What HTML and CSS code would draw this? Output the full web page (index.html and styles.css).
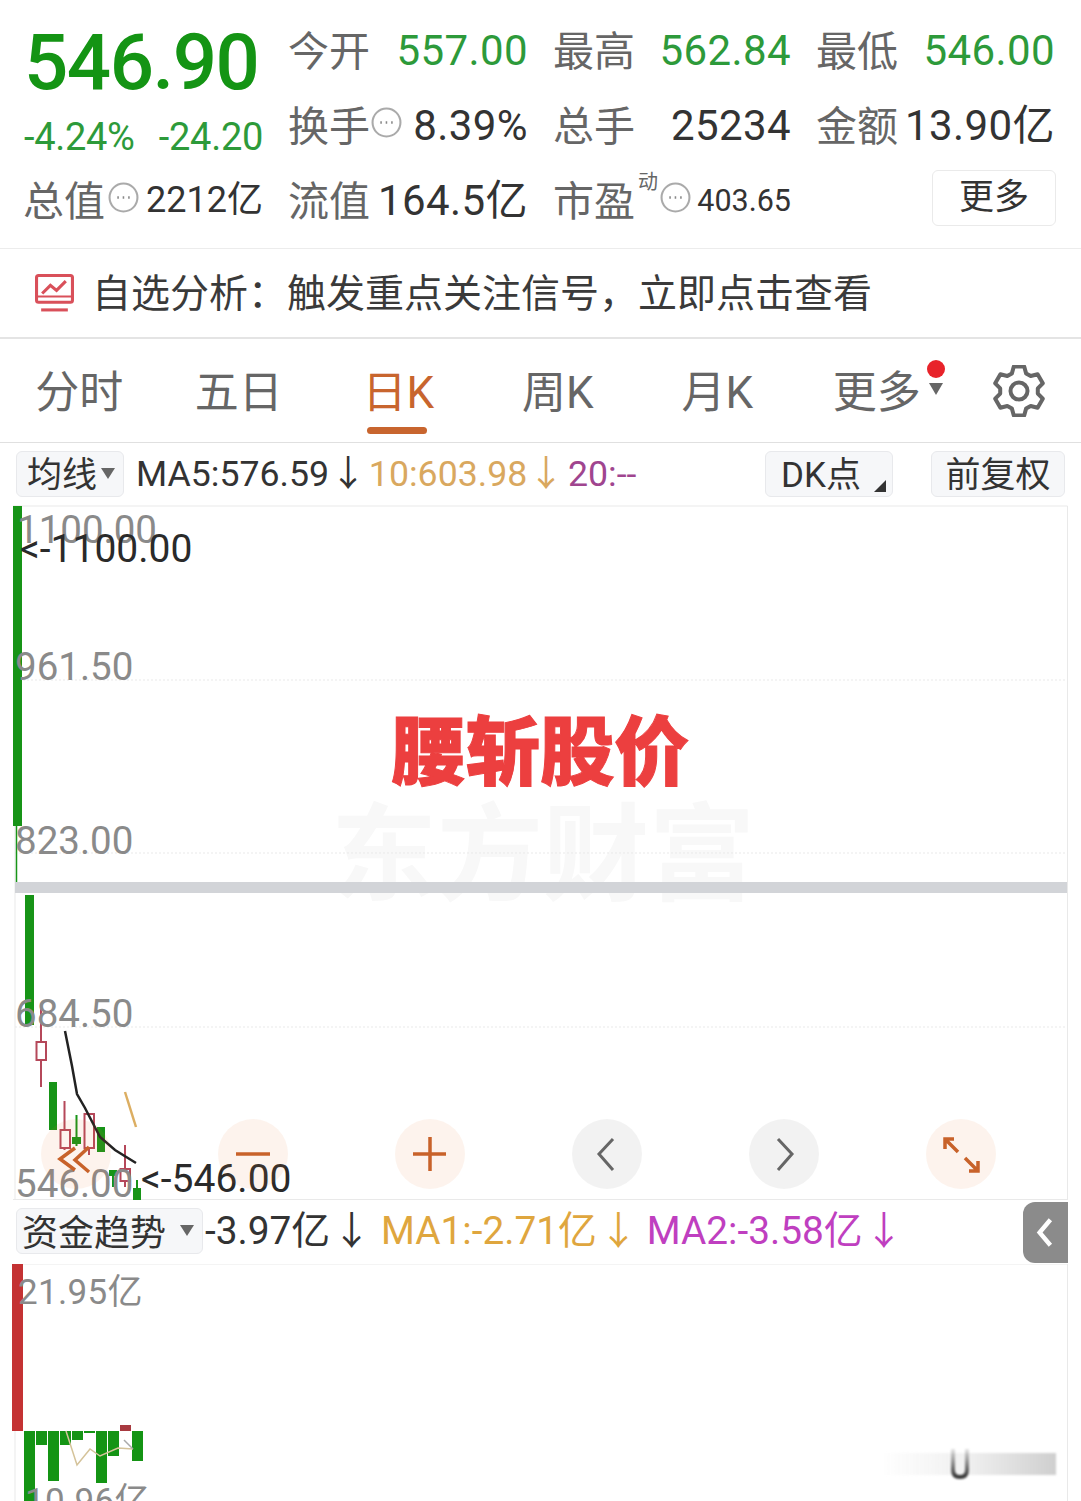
FILE: index.html
```html
<!DOCTYPE html>
<html lang="zh-CN">
<head>
<meta charset="utf-8">
<title>行情</title>
<link rel="stylesheet" href="styles.css">
</head>
<body>
<div class="page">
  <section class="quote">
    <div class="price-cell">
      <div class="price">546.90</div>
      <div class="change"><span>-4.24%</span><span>-24.20</span></div>
    </div>
    <div class="cell"><span class="label">今开</span><span class="num green">557.00</span></div>
    <div class="cell"><span class="label">最高</span><span class="num green">562.84</span></div>
    <div class="cell"><span class="label">最低</span><span class="num green">546.00</span></div>
    <div class="cell"><span class="label">换手</span><svg class="dots dots-up" viewBox="0 0 30 30"><circle cx="15" cy="15" r="13.5"/><path d="M9 15h1.5M14.2 15h1.5M19.5 15h1.5"/></svg><span class="num num-end">8.39%</span></div>
    <div class="cell"><span class="label">总手</span><span class="num">25234</span></div>
    <div class="cell"><span class="label">金额</span><span class="num">13.90亿</span></div>
    <div class="cell cell-left"><span class="label">总值</span><svg class="dots dots-up" viewBox="0 0 30 30"><circle cx="15" cy="15" r="13.5"/><path d="M9 15h1.5M14.2 15h1.5M19.5 15h1.5"/></svg><span class="num num-sm num-end">2212亿</span></div>
    <div class="cell"><span class="label">流值</span><span class="num">164.5亿</span></div>
    <div class="cell cell-pe"><span class="label">市盈</span><sup class="dyn">动</sup><svg class="dots dots-pe" viewBox="0 0 30 30"><circle cx="15" cy="15" r="13.5"/><path d="M9 15h1.5M14.2 15h1.5M19.5 15h1.5"/></svg><span class="num num-xs num-end">403.65</span></div>
    <div class="cell cell-more"><button class="more-btn">更多</button></div>
  </section>

  <section class="notice">
    <svg class="notice-icon" viewBox="0 0 38 38"><rect x="1.500" y="1.500" width="35" height="26" rx="2"/><path d="M7 19l8-8 6 5 9-9"/><path class="thin" d="M2 22h34"/><path d="M6 35h26"/></svg>
    <span class="notice-text">自选分析：触发重点关注信号，立即点击查看</span>
  </section>

  <nav class="tabs">
    <div class="tab">分时</div>
    <div class="tab">五日</div>
    <div class="tab tab-active">日K</div>
    <div class="tab">周K</div>
    <div class="tab">月K</div>
    <div class="tab tab-more">更多<i class="red-dot"></i><i class="tab-caret"></i></div>
    <svg class="gear" viewBox="0 0 52 52"><path d="M18.900 8.400L20.800 1.500H31.200L33.100 8.400L37.700 11L44.600 9.300L49.800 18.300L44.800 23.400V28.600L49.800 33.700L44.600 42.700L37.700 41L33.100 43.600L31.200 50.500H20.800L18.900 43.600L14.300 41L7.400 42.700L2.200 33.700L7.200 28.600V23.400L2.200 18.300L7.400 9.300L14.300 11Z"/><circle cx="26" cy="26" r="8.500"/></svg>
  </nav>

  <div class="ma-bar">
    <div class="select select-ma">均线<i class="caret"></i></div>
    <span class="ma-text ma-first">MA5:576.59<b class="arrow">↓</b></span>
    <span class="ma-text gold">10:603.98<b class="arrow">↓</b></span>
    <span class="ma-text plum">20:--</span>
    <div class="select select-dk">DK点<i class="corner"></i></div>
    <div class="select select-fq">前复权</div>
  </div>

  <div class="chart">
    <svg class="chart-svg" viewBox="0 505 1081 695">
      <text class="watermark" x="331" y="892">东方财富</text>
      <path class="frame" d="M13 506H1067.500V1200M1067.500 1199.500H13M15 506V1200"/>
      <path class="grid" d="M15 680H1067M15 853H1067M15 1027H1067"/>
      <rect class="band" x="15" y="882" width="1052" height="11"/>
      <rect class="up-bar" x="13" y="506" width="9" height="320"/>
      <path class="thin-line" d="M16.500 826V882"/>
      <rect class="up-bar" x="25" y="895" width="9" height="130"/>
      <g class="hollow">
        <path d="M41 1004V1042M41 1060V1087"/><rect x="36.500" y="1042" width="9.500" height="18"/>
        <path d="M64.500 1101V1130M64.500 1148V1150"/><rect x="60.500" y="1130" width="9.500" height="18"/>
        <path d="M89 1148V1155"/><rect x="84.500" y="1114" width="9.500" height="34"/>
        <path d="M125 1145V1169M125 1181V1187"/><rect x="120.500" y="1169" width="9.500" height="12"/>
      </g>
      <rect class="up-bar" x="49" y="1082" width="8" height="48"/>
      <rect class="up-bar" x="72" y="1137" width="9" height="7"/><path class="wick" d="M76.500 1115V1146"/>
      <rect class="up-bar" x="97" y="1127" width="8" height="25"/>
      <rect class="up-bar" x="109" y="1170" width="8" height="6"/><path class="wick" d="M113 1170V1187"/>
      <rect class="up-bar" x="133" y="1188" width="8" height="12"/><path class="wick" d="M137 1180V1190"/>
      <path class="ma-line" d="M65 1031L72 1066L77 1094L85 1108L100 1137L115 1150L136 1163"/>
      <path class="gold-line" d="M125 1092L136 1127"/>
      <text class="axis" x="17" y="543">1100.00</text>
      <text class="mark" x="20" y="562">&lt;-1100.00</text>
      <text class="axis" x="15" y="680">961.50</text>
      <text class="axis" x="15" y="854">823.00</text>
      <text class="axis" x="15" y="1027">684.50</text>
      <text class="axis" x="15" y="1197">546.00</text>
      <text class="mark" x="141" y="1192">&lt;-546.00</text>
      <text class="headline" x="391" y="779">腰斩股价</text>
    </svg>
    <div class="controls">
      <button class="round warm"><svg viewBox="0 0 70 70"><path d="M34 29L19 40L34 51M48 28L34 41L48 53"/></svg></button>
      <button class="round warm"><svg viewBox="0 0 70 70"><path d="M18 35H52"/></svg></button>
      <button class="round warm"><svg viewBox="0 0 70 70"><path d="M18 35H51M35 18V52"/></svg></button>
      <button class="round cool"><svg viewBox="0 0 70 70"><path d="M41 20L27 35L41 51"/></svg></button>
      <button class="round cool"><svg viewBox="0 0 70 70"><path d="M29 20L43 35L29 51"/></svg></button>
      <button class="round warm"><svg viewBox="0 0 70 70"><path d="M19 20L32 33M19 30V20H28M52 52L39 39M52 42V52H43"/></svg></button>
    </div>
  </div>

  <div class="fund-bar">
    <div class="select select-fund">资金趋势<i class="caret"></i></div>
    <span class="fund-text fund-main">-3.97亿<b class="arrow">↓</b></span>
    <span class="fund-text fund-gold">MA1:-2.71亿<b class="arrow">↓</b></span>
    <span class="fund-text fund-plum">MA2:-3.58亿<b class="arrow">↓</b></span>
    <div class="side-tab"><svg viewBox="0 0 46 62"><path d="M28 18L17 31L28 44"/></svg></div>
  </div>

  <div class="chart2">
    <svg class="chart-svg" viewBox="0 1264 1081 237">
      <path class="frame" d="M13 1264H1067.500V1501M15 1264V1501"/>
      <rect class="flow-red" x="12" y="1264" width="11" height="167"/>
      <rect class="flow-green" x="24" y="1431" width="11" height="70"/>
      <rect class="flow-green" x="36" y="1431" width="11" height="14"/>
      <rect class="flow-green" x="48" y="1431" width="11" height="50"/>
      <rect class="flow-green" x="60" y="1431" width="11" height="14"/>
      <rect class="flow-green" x="72" y="1431" width="11" height="9"/>
      <rect class="flow-green" x="84" y="1431" width="11" height="2"/>
      <rect class="flow-green" x="96" y="1431" width="11" height="52"/>
      <rect class="flow-green" x="108" y="1431" width="11" height="25"/>
      <rect class="flow-dark" x="120" y="1425" width="11" height="6"/>
      <rect class="flow-green" x="132" y="1431" width="11" height="30"/>
      <path class="tan-line" d="M66 1431L77 1465L90 1449L100 1456L118 1448L133 1449"/>
      <path class="gray-line" d="M124 1440L133 1449"/>
      <text class="axis axis-money" x="18" y="1304">21.95亿</text>
      <text class="axis axis-money" x="25" y="1513">10.96亿</text>
    </svg>
    <div class="smudge"><svg class="smudge-u" viewBox="0 0 20 30"><defs><linearGradient id="fade" x1="0" y1="0" x2="0" y2="1"><stop offset="0" stop-color="#555" stop-opacity=".15"/><stop offset="1" stop-color="#333"/></linearGradient></defs><path d="M3 0V21Q3 28 10 28T17 21V0" stroke="url(#fade)"/></svg></div>
  </div>
</div>
</body>
</html>
```
FILE: styles.css
```css
* { box-sizing: border-box; }
html, body { margin: 0; padding: 0; background: #fff; }
body { font-family: Roboto, "Noto Sans CJK SC", sans-serif; color: #333; }
.page { width: 1081px; height: 1501px; overflow: hidden; }
button { font: inherit; border: 0; padding: 0; background: none; color: inherit; }
i { display: block; }

/* Quote header */
.quote {
  height: 249px;
  padding: 13px 25px 0 24px;
  border-bottom: 1px solid #ececec;
  display: grid;
  grid-template-columns: 239px 240px 238px 239px;
  grid-template-rows: repeat(3, 75px);
  column-gap: 25px;
}
.price-cell { grid-row: 1 / span 2; display: flex; flex-direction: column; }
.price { height: 98px; line-height: 100px; font-size: 78px; font-weight: 500; color: #149414; letter-spacing: -1.500px; }
.change { height: 52px; line-height: 52px; font-size: 38px; letter-spacing: -.3px; color: #2d9a3a; display: flex; justify-content: space-between; }
.cell { display: flex; align-items: center; justify-content: space-between; height: 75px; line-height: 75px; white-space: nowrap; }
.cell-left { margin-left: -1px; }
.label { font-size: 41px; color: #666; margin-top: 4px; }
.num { font-size: 42px; letter-spacing: .4px; color: #333; }
.green { color: #2d9a3a; }
.num-sm { font-size: 36px; letter-spacing: 0; }
.num-xs { font-size: 30.500px; letter-spacing: 0; }
.num-end { margin-left: auto; }
.dots { width: 31px; height: 31px; margin-left: 1px; fill: none; stroke: #aaa; stroke-width: 2; flex: none; }
.dots path { stroke: #888; stroke-width: 2.500; }
.dots-up { align-self: flex-start; margin-top: 19px; }
.cell-left .dots { margin-left: 3px; }
.dots-pe { margin-top: -6px; margin-left: 0; }
.dyn { font-size: 20px; line-height: 20px; color: #666; align-self: flex-start; margin: 9px 2px 0 3px; }
.cell-more { justify-content: flex-end; }
.more-btn { width: 124px; height: 56px; line-height: 50px; font-size: 35px; border: 1px solid #eaeaea; border-radius: 6px; color: #333; margin: -6px -1px 0 0; }

/* Notice */
.notice {
  height: 90px;
  padding-left: 35px;
  border-bottom: 2px solid #e4e4e4;
  display: flex;
  align-items: center;
  gap: 18px;
  font-size: 39px;
  color: #3a3a3a;
}
.notice-text { margin-bottom: 6px; }
.notice-icon { width: 39px; height: 39px; fill: none; stroke: #d9505a; stroke-width: 3; }
.notice-icon .thin { stroke-width: 2; }

/* Tabs */
.tabs {
  height: 104px;
  border-bottom: 1px solid #e0e0e0;
  display: grid;
  grid-template-columns: repeat(6, 159.500px) 1fr;
  align-items: center;
  justify-items: center;
  position: relative;
}
.tab { font-size: 44px; color: #666; position: relative; height: 103px; line-height: 109px; white-space: nowrap; margin-left: -1px; }
.tab-active { color: #c8652e; }
.tab-active::after {
  content: "";
  position: absolute;
  left: 5px; width: 60px; bottom: 8px;
  height: 7px;
  border-radius: 4px;
  background: #c8652e;
}
.red-dot { position: absolute; left: 94px; top: 21px; width: 18px; height: 18px; border-radius: 50%; background: #e8232a; }
.tab-caret { position: absolute; left: 96px; top: 44px; border: 7px solid transparent; border-top: 12px solid #666; border-bottom: 0; }
.gear { width: 52px; height: 52px; justify-self: start; margin-left: 36px; fill: none; stroke: #666; stroke-width: 4; stroke-linejoin: round; }

/* MA bar */
.ma-bar { height: 62px; display: flex; align-items: center; padding: 0 16px; white-space: nowrap; }
.select { height: 46px; line-height: 48px; background: #f6f7f9; border: 1px solid #e8e9ec; border-radius: 6px; color: #333; position: relative; font-size: 35px; flex: none; }
.select-ma { width: 108px; padding-left: 10px; }
.select-dk { width: 128px; padding-left: 15px; margin-left: auto; }
.select-fq { width: 134px; margin-left: 38px; text-align: center; }
.caret { position: absolute; right: 8px; top: 16px; border: 7px solid transparent; border-top: 11px solid #666; border-bottom: 0; }
.corner { position: absolute; right: 6px; bottom: 4px; border-style: solid; border-width: 0 0 12px 12px; border-color: transparent transparent #333 transparent; }
.ma-text { font-size: 35.700px; line-height: 44px; color: #333; margin-left: 3px; }
.ma-first { margin-left: 12px; }
.plum { margin-left: 4px; }
.arrow { font-weight: 400; line-height: 0; margin-left: 1px; font-family: "Noto Sans CJK SC", sans-serif; }
.gold { color: #d9a85f; }
.plum { color: #a0458f; }

/* Charts */
.chart { height: 695px; position: relative; }
.chart-svg { display: block; width: 1081px; height: 100%; }
.chart text { font-family: Roboto, "Noto Sans CJK SC", sans-serif; }
.frame { stroke: #e9e9e9; stroke-width: 1; fill: none; }
.grid { stroke: #e9e9e9; stroke-width: 1; stroke-dasharray: 2 2; fill: none; }
.band { fill: #d2d4d8; }
.up-bar { fill: #179417; }
.thin-line { stroke: #179417; stroke-width: 1.500; fill: none; }
.hollow { fill: #fff; stroke: #b5485a; stroke-width: 2; }
.hollow path { fill: none; }
.wick { stroke: #179417; stroke-width: 2; fill: none; }
.ma-line { stroke: #222; stroke-width: 2.500; fill: none; }
.gold-line { stroke: #dcae62; stroke-width: 2.500; fill: none; }
.axis { font-size: 38.500px; fill: #8a8a8a; font-family: Roboto, "Noto Sans CJK SC", sans-serif; }
.axis-money { font-size: 35px; letter-spacing: .3px; }
.mark { font-size: 39px; fill: #2a2a2a; }
.headline { font-size: 74.500px; font-weight: 900; fill: #ec3f3f; stroke: #ec3f3f; stroke-width: 1; font-family: "Noto Sans CJK SC", sans-serif; }
.watermark { font-size: 106px; font-weight: 700; fill: #f8f8f8; font-family: "Noto Sans CJK SC", sans-serif; }
.controls { position: absolute; left: 41px; top: 614px; display: flex; gap: 107px; }
.round { width: 70px; height: 70px; border-radius: 50%; display: block; }
.round svg { display: block; width: 70px; height: 70px; fill: none; stroke-width: 3.500; }
.warm { background: rgba(235, 120, 60, .09); }
.warm svg { stroke: #c8622a; }
.cool { background: rgba(0, 0, 0, .05); }
.cool svg { stroke: #666; stroke-width: 3; }

/* Fund bar */
.fund-bar { height: 64px; display: flex; align-items: center; padding: 0 0 2px 16px; position: relative; white-space: nowrap; }
.select-fund { width: 187px; padding-left: 5px; font-size: 36px; line-height: 50px; }
.fund-text { font-size: 38.800px; line-height: 46px; }
.fund-main { color: #333; margin-left: 2px; }
.fund-main .arrow, .fund-gold .arrow, .fund-plum .arrow { margin-left: 2px; }
.fund-gold { color: #dfa63e; margin-left: 10px; }
.fund-plum { color: #bf3fc0; margin-left: 9px; }
.side-tab { position: absolute; left: 1023px; top: 2px; width: 45px; height: 61px; background: #8b8b8b; border-radius: 12px 0 0 12px; }
.side-tab svg { display: block; width: 45px; height: 61px; fill: none; stroke: #fff; stroke-width: 4.500; }

.chart2 { height: 237px; position: relative; overflow: hidden; }
.chart2 .chart-svg { height: 237px; }
.flow-red { fill: #c43233; }
.flow-green { fill: #149414; }
.flow-dark { fill: #a83a40; }
.tan-line { stroke: #d5c39a; stroke-width: 1.500; fill: none; }
.gray-line { stroke: #aaa; stroke-width: 1.500; fill: none; }
.smudge { position: absolute; left: 880px; top: 189px; width: 176px; height: 22px; background: linear-gradient(90deg, rgba(255,255,255,0), #f0f0f0 50%, #cfcfcf); filter: blur(1px); }
.smudge-u { position: absolute; left: 70px; top: -4px; width: 20px; height: 30px; fill: none; stroke-width: 4; }
```
